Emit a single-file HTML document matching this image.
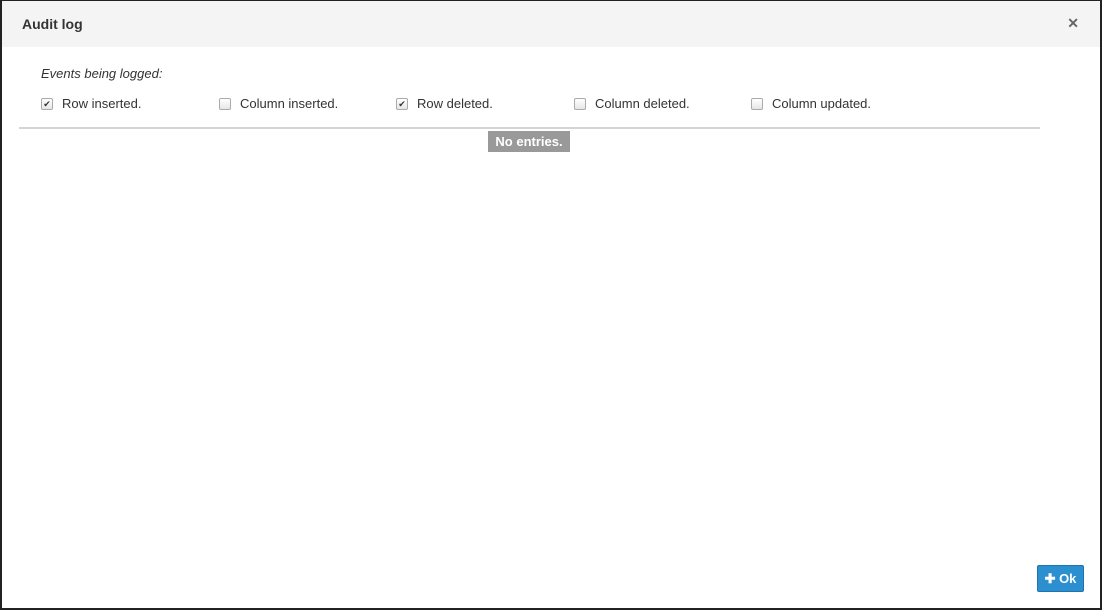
<!DOCTYPE html>
<html><head><style>
html,body{margin:0;padding:0;width:1102px;height:610px;overflow:hidden;background:#222;font-family:"Liberation Sans",sans-serif;}
.m{position:absolute;left:2px;top:1px;width:1098px;height:607px;background:#fff;}
.h{height:46px;background:#f4f4f4;position:relative;}
.h .t{position:absolute;left:20px;top:15px;font-size:14px;font-weight:bold;color:#333;}
.h .x{position:absolute;right:21px;top:14px;font-size:14px;font-weight:bold;color:#666;}
.ev{position:absolute;left:39px;top:65px;font-size:13px;font-style:italic;color:#333;}
.cb{position:absolute;top:95px;font-size:13px;color:#333;}
.cb i{position:absolute;left:0;top:2px;width:10px;height:10px;border:1px solid #aaa;border-radius:2px;background:linear-gradient(#fff,#e6e6e6);font-style:normal;font-size:9px;line-height:10px;text-align:center;color:#333;}
.cb span{position:absolute;left:21px;top:0;white-space:nowrap;}
.hr{position:absolute;left:17px;top:126px;width:1021px;height:2px;background:#d4d4d4;}
.ne{position:absolute;left:486px;top:130px;width:82px;height:21px;background:#999;color:#fff;font-weight:bold;font-size:13px;text-align:center;line-height:21px;}
.ok{position:absolute;left:1035px;top:564px;width:47px;height:27px;background:#2c8fd0;border:1px solid #1f74b0;border-radius:2px;color:#fff;font-weight:bold;font-size:13px;line-height:25px;text-align:center;box-sizing:border-box;}
</style></head><body>
<div class="m">
<div class="h"><div class="t">Audit log</div><div class="x">✕</div></div>
<div class="ev">Events being logged:</div>
<div class="cb" style="left:39px"><i>✔</i><span>Row inserted.</span></div>
<div class="cb" style="left:217px"><i></i><span>Column inserted.</span></div>
<div class="cb" style="left:394px"><i>✔</i><span>Row deleted.</span></div>
<div class="cb" style="left:572px"><i></i><span>Column deleted.</span></div>
<div class="cb" style="left:749px"><i></i><span>Column updated.</span></div>
<div class="hr"></div>
<div class="ne">No entries.</div>
<div class="ok">✚ Ok</div>
</div>
</body></html>
